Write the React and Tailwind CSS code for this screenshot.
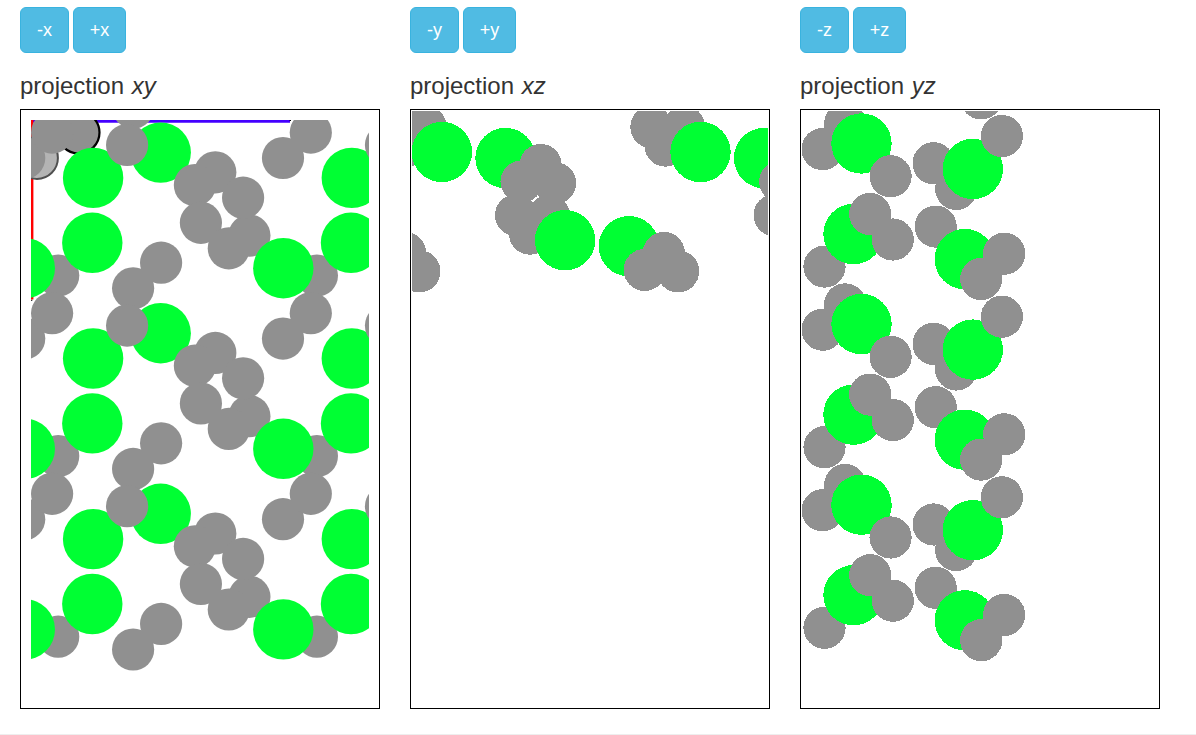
import React from 'react';

const GRAY = '#909090';
const GREEN = '#00ff33';
const PERIOD = 180.6;

// Atoms are listed back to front as [kind, x, y], in panel coordinates.
const XY_CELL = [
  ['g', 4.2, 49], ['g', 32.1, 23.6], ['g', 263, 49], ['g', 290.8, 23.6],
  ['g', 38.2, 166.5], ['g', 296.9, 166.5], ['g', 229.4, 126.6],
  ['G', 73.1, 68.9], ['G', 72.3, 133.8], ['G', 4.8, 159.2], ['G', 140.7, 43.6],
  ['G', 331.8, 68.9], ['G', 331, 133.8], ['G', 263.3, 159.2],
  ['g', 113.1, 179.3], ['g', 141.1, 153.7], ['g', 107.1, 36],
  ['g', 195.3, 63.3], ['g', 174.9, 76.1], ['g', 223.1, 88.7],
  ['g', 180.9, 113.8], ['g', 208.8, 139.3], ['g', 366, 36],
];

const XZ_ATOMS = [
  ['g', -17, 18], ['g', 15.6, 18], ['g', -3, 36.6], ['G', 31.9, 43],
  ['G', 95.5, 49.1], ['g', 130.6, 56], ['g', 111.6, 72.6], ['g', 145, 74.2],
  ['g', 106.1, 106.2], ['g', 139, 107], ['g', 120, 124.6], ['G', 155.1, 131.2],
  ['G', 218.9, 137.2], ['g', 253.8, 144], ['g', 234.7, 160.9], ['g', 268.1, 162.4],
  ['g', -4.8, 144], ['g', 9.4, 162.4],
  ['g', 241.4, 18], ['g', 274.2, 18], ['g', 255.5, 36.6], ['G', 290.5, 43],
  ['G', 354.1, 49.1], ['g', 370.3, 72.6], ['g', 364.6, 106.2],
];

const YZ_CELL = [
  ['g', 45.2, 14.8], ['g', 22.6, 40.1], ['g', 24.5, 157.6],
  ['g', 156.2, 79.9], ['g', 133.6, 54.3], ['g', 135.7, 117.6],
  ['G', 61.5, 34.5], ['G', 53.5, 125], ['G', 172.8, 60], ['G', 164.8, 150.1],
  ['g', 90.6, 67.3], ['g', 70.2, 105], ['g', 92.8, 130.5],
  ['g', 201.9, 27.1], ['g', 204.2, 144.7], ['g', 181.2, 170],
];

function repeatCell(cell) {
  return [0, 1, 2].flatMap((n) => cell.map(([k, x, y]) => [k, x, y + n * PERIOD]));
}

const XY_ATOMS = [['g', 113.1, -1.3], ...repeatCell(XY_CELL)];
const YZ_ATOMS = [['g', 181.2, -10.6], ...repeatCell(YZ_CELL)];

function Atoms({ atoms }) {
  return atoms.map(([kind, x, y], i) => (
    <circle key={i} cx={x} cy={y} r={kind === 'G' ? 30.2 : 21.1} fill={kind === 'G' ? GREEN : GRAY} />
  ));
}

function XYDrawing() {
  return (
    <svg width="338" height="588" viewBox="11 11 338 588" className="ml-[10px] mt-[10px] block">
      <path d="M11 12.2H270" stroke="#4400ff" strokeWidth="2.9" />
      <path d="M12.1 11V190.5" stroke="#ff0000" strokeWidth="2.6" />
      <path d="M269.5 11.5h1.5M11 191.3h1.3" stroke="#000" strokeWidth="1" />
      <circle cx="17" cy="49" r="20.9" fill="#b4b4b4" stroke="#505050" strokeWidth="2" />
      <circle cx="58.6" cy="23.6" r="20.9" fill={GRAY} stroke="#000" strokeWidth="2.2" />
      <Atoms atoms={XY_ATOMS} />
    </svg>
  );
}

function PlainDrawing({ atoms }) {
  return (
    <svg width="356" height="596" viewBox="2 2 356 596" shapeRendering="crispEdges" className="ml-px mt-px block">
      <Atoms atoms={atoms} />
    </svg>
  );
}

function ShiftButton({ children, className }) {
  return (
    <button
      type="button"
      className={`h-[46px] rounded-md border border-[#39b3df] bg-[#50bbe3] text-center text-[18px] leading-6 text-white ${className}`}
    >
      {children}
    </button>
  );
}

function Projection({ axis, plane, children }) {
  return (
    <section className="w-[360px] shrink-0">
      <div className="flex gap-1">
        <ShiftButton className="w-[49px]">-{axis}</ShiftButton>
        <ShiftButton className="w-[53px]">+{axis}</ShiftButton>
      </div>
      <h3 className="mt-5 h-[26px] text-[24px] leading-[26px] text-[#333333]">
        projection <em className="ml-px">{plane}</em>
      </h3>
      <div className="mt-[10px] h-[600px] w-[360px] overflow-hidden border border-black">{children}</div>
    </section>
  );
}

export default function App() {
  return (
    <main className="h-[735px] w-[1196px] overflow-hidden border-b border-[#eeeeee] bg-white font-['Liberation_Sans',Arial,sans-serif]">
      <div className="flex gap-[30px] pl-5 pt-[7px]">
        <Projection axis="x" plane="xy">
          <XYDrawing />
        </Projection>
        <Projection axis="y" plane="xz">
          <PlainDrawing atoms={XZ_ATOMS} />
        </Projection>
        <Projection axis="z" plane="yz">
          <PlainDrawing atoms={YZ_ATOMS} />
        </Projection>
      </div>
    </main>
  );
}
